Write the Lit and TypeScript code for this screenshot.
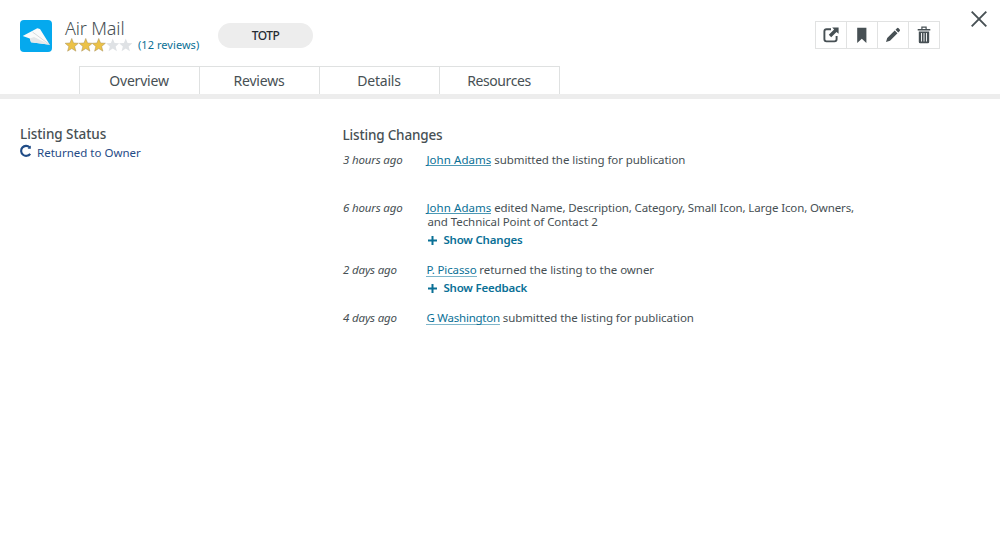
import { LitElement, html, css, svg } from "lit";
import { customElement } from "lit/decorators.js";

interface Change {
  when: string;
  who: string;
  lines: string[];
  toggle?: string;
  kind: string;
}

const changes: Change[] = [
  { when: "3 hours ago", who: "John Adams", lines: ["submitted the listing for publication"], kind: "first" },
  {
    when: "6 hours ago",
    who: "John Adams",
    lines: ["edited Name, Description, Category, Small Icon, Large Icon, Owners,", "and Technical Point of Contact 2"],
    toggle: "Show Changes",
    kind: "edit",
  },
  { when: "2 days ago", who: "P. Picasso", lines: ["returned the listing to the owner"], toggle: "Show Feedback", kind: "return" },
  { when: "4 days ago", who: "G Washington", lines: ["submitted the listing for publication"], kind: "last" },
];

const STAR = "M7 0.2 8.9 4.9 13.9 5.2 10 8.5 11.3 13.4 7 10.7 2.7 13.4 4 8.5 0.1 5.2 5.1 4.9Z";

@customElement("app-root")
export class AppRoot extends LitElement {
  static styles = css`
    :host { display: block; height: 540px; background: #fff; color: #475054; font-family: "Noto Sans", sans-serif; overflow: hidden; }
    * { box-sizing: border-box; }
    svg { display: block; flex: none; }
    .top { display: flex; height: 66px; padding-left: 20px; }
    .logo { margin-top: 20px; width: 32px; height: 32px; }
    .ident { margin: 18px 0 0 13px; width: 153px; }
    .name { font-size: 18px; line-height: 20px; height: 20px; font-weight: 300; letter-spacing: -0.15px; white-space: nowrap; }
    .rating { display: flex; height: 14px; }
    .count { margin-left: 5.5px; font-size: 11px; line-height: 14px; letter-spacing: 0.05px; color: #0a7096; white-space: nowrap; }
    .tag { margin-top: 23px; width: 95px; height: 25px; border-radius: 13px; background: #ededed; color: #252c33; font-size: 12px; line-height: 25px; text-align: center; letter-spacing: -0.55px; font-weight: 500; }
    .actions { margin: 21px 0 0 502px; display: flex; width: 125px; height: 28px; border: 1px solid #e1e2e2; }
    .action { flex: 1; border-right: 1px solid #e1e2e2; display: flex; align-items: center; justify-content: center; }
    .action:last-child { border-right: 0; }
    .close { margin: 11px 0 0 31px; width: 16px; height: 16px; }
    .tabs { display: flex; height: 33px; padding-left: 79px; border-bottom: 5px solid #ededed; }
    .tab { width: 120px; height: 28px; padding-right: 1px; border-top: 1px solid #dfe1e1; border-left: 1px solid #dfe1e1; font-size: 14px; line-height: 28px; letter-spacing: -0.2px; text-align: center; }
    .tab:last-child { width: 121px; border-right: 1px solid #dfe1e1; letter-spacing: -0.42px; }
    .body { display: flex; padding-left: 20px; }
    .status { width: 322px; padding-top: 26px; }
    h2 { margin: 0; font-size: 13.5px; line-height: 18px; font-weight: 500; white-space: nowrap; letter-spacing: -0.06px; }
    .changes h2 { letter-spacing: -0.17px; padding-left: 0.5px; }
    .state { display: flex; margin-top: 1px; color: #1f4b86; font-size: 11.5px; line-height: 18px; }
    .state svg { margin: 0 5px 0 0; }
    .changes { width: 560px; padding-top: 27px; }
    .row { display: flex; font-size: 11.5px; line-height: 14px; padding-left: 1px; letter-spacing: -0.07px; }
    .first { margin-top: 9px; height: 48px; }
    .edit { height: 62px; }
    .return { height: 48px; letter-spacing: -0.04px; }
    .when { width: 83.4px; font-style: italic; white-space: nowrap; letter-spacing: -0.16px; }
    .line { display: flex; gap: 2.8px; white-space: nowrap; height: 14px; }
    .edit .what { letter-spacing: -0.13px; }
    .cont { padding-left: 1px; }
    .who { color: #0a7096; border-bottom: 1px solid #4c99b5; height: 13px; line-height: 14px; letter-spacing: 0.06px; }
    .return .who { letter-spacing: -0.13px; height: 14px; border-color: #7fb6ca; }
    .last .who { letter-spacing: -0.23px; height: 14px; border-color: #7fb6ca; }
    .toggle { display: flex; align-items: center; margin: 4px 0 0 2px; height: 14px; color: #0a7096; font-weight: 600; white-space: nowrap; letter-spacing: -0.2px; }
    .toggle svg { margin-right: 6px; }
  `;

  star(full: boolean) {
    return html`<svg width="13.5" height="14" viewBox="0 0 14 14">${svg`<path d=${STAR} fill=${full ? "#ecc247" : "#dfe2e5"} stroke=${full ? "#a58f55" : "none"} stroke-width="0.5"></path>`}</svg>`;
  }

  row(c: Change) {
    return html`<div class="row ${c.kind}">
      <div class="when"><span>${c.when}</span></div>
      <div>
        <div class="line"><span class="who">${c.who}</span><span class="what">${c.lines[0]}</span></div>
        ${c.lines[1] ? html`<div class="line cont"><span>${c.lines[1]}</span></div>` : ""}
        ${c.toggle
          ? html`<div class="toggle"><svg width="9" height="9" viewBox="0 0 9 9"><path d="M4.5 0V9M0 4.5H9" stroke="#0a7096" stroke-width="2"></path></svg><span>${c.toggle}</span></div>`
          : ""}
      </div>
    </div>`;
  }

  render() {
    return html`
      <div class="top">
        <svg class="logo" viewBox="0 0 32 32">
          <rect width="32" height="32" rx="4" fill="#05a9ee"></rect>
          <path d="M2.7 16 17.3 8.3 20 9 29.8 24.8 11 22.2 9.8 18.4Z" fill="#fafbfb"></path>
          <path d="M9.8 18.4 14 17 29.8 24.8 11 22.2Z" fill="#e3e7e9"></path>
          <path d="M12.5 12 29.8 24.8" stroke="#c5ccd0" stroke-width="0.7"></path>
        </svg>
        <div class="ident">
          <div class="name"><span>Air Mail</span></div>
          <div class="rating">${[1, 1, 1, 0, 0].map((s) => this.star(!!s))}<span class="count">(12 reviews)</span></div>
        </div>
        <div class="tag"><span>TOTP</span></div>
        <div class="actions">
          <div class="action"><svg width="16" height="16" viewBox="0 0 16 16"><path d="M8 2.2H3.5Q1.4 2.2 1.4 4.3V12.3Q1.4 14.4 3.5 14.4H11.5Q13.6 14.4 13.6 12.3V9" fill="none" stroke="#475054" stroke-width="1.9"></path><path d="M9.2 0.4H15.6V6.8L13.5 4.9 8.2 10.2 5.8 7.8 11.1 2.5Z" fill="#475054"></path></svg></div>
          <div class="action"><svg width="16" height="16" viewBox="0 0 16 16"><path d="M3.2 0.7H12.4V16L7.8 11.8 3.2 16Z" fill="#475054"></path></svg></div>
          <div class="action"><svg width="16" height="16" viewBox="0 0 16 16"><path d="M1 15 2.2 11 9.7 3.5 12.5 6.3 5 13.8ZM10.5 2.7 12 1.2Q12.8.5 13.6 1.3L14.7 2.4Q15.5 3.2 14.7 4L13.3 5.5Z" fill="#475054"></path></svg></div>
          <div class="action"><svg width="16" height="18" viewBox="0 0 16 18"><path d="M5.9 3V1.1H10.1V3" fill="none" stroke="#475054" stroke-width="1.2"></path><path d="M1.7 2.9H14.3V4.6H1.7ZM2.8 5.4H13.2V15.9Q13.2 17.3 11.8 17.3H4.2Q2.8 17.3 2.8 15.9Z" fill="#475054"></path><path d="M5.5 7V15.5M8 7V15.5M10.5 7V15.5" stroke="#fff" stroke-width="0.9"></path></svg></div>
        </div>
        <svg class="close" viewBox="0 0 16 16"><path d="M.7.7 15.3 15.3M15.3.7.7 15.3" stroke="#475054" stroke-width="1.9"></path></svg>
      </div>
      <div class="tabs">${["Overview", "Reviews", "Details", "Resources"].map((t) => html`<div class="tab"><span>${t}</span></div>`)}</div>
      <div class="body">
        <div class="status">
          <h2><span>Listing Status</span></h2>
          <div class="state"><svg width="12" height="14" viewBox="0 0 12 14"><path d="M10.2 9.8A5 5 0 1 1 9.6 3.2" fill="none" stroke="#1f4b86" stroke-width="2.1"></path><path d="M10.8 1.4V4.8H7.6Z" fill="#1f4b86"></path></svg><span>Returned to Owner</span></div>
        </div>
        <div class="changes">
          <h2><span>Listing Changes</span></h2>
          ${changes.map((c) => this.row(c))}
        </div>
      </div>
    `;
  }
}
